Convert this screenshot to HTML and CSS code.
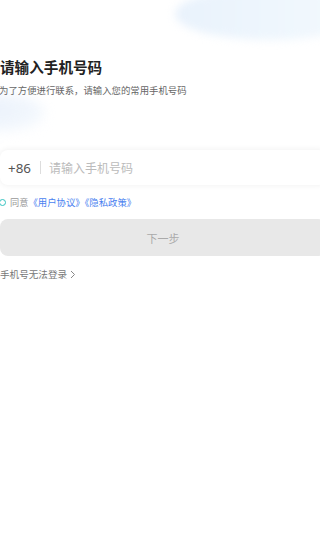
FILE: index.html
```html
<!DOCTYPE html>
<html lang="zh-CN">
<head>
<meta charset="utf-8">
<link rel="stylesheet" href="styles.css">
</head>
<body>
<div class="page">
  <div class="blob blob-top"></div>
  <div class="blob blob-left"></div>
  <div class="content">
    <h1 class="title">请输入手机号码</h1>
    <p class="subtitle">为了方便进行联系，请输入您的常用手机号码</p>
    <div class="phone-box">
      <span class="code">+86</span>
      <span class="divider"></span>
      <span class="placeholder">请输入手机号码</span>
    </div>
    <div class="agree">
      <span class="radio"></span>
      <span class="agree-text">同意</span>
      <span class="link">《用户协议》《隐私政策》</span>
    </div>
    <div class="next-btn">下一步</div>
    <div class="alt">手机号无法登录<svg class="chev" width="6" height="9" viewBox="0 0 6 9"><path d="M1 1l3.5 3.5L1 8" fill="none" stroke="#888" stroke-width="1"/></svg></div>
  </div>
</div>
</body>
</html>
```
FILE: styles.css
```css
html, body {
  margin: 0;
  padding: 0;
  background: #fff;
  overflow: hidden;
  width: 320px;
  height: 559px;
}
.page {
  position: relative;
  width: 320px;
  height: 559px;
  overflow: hidden;
  font-family: "Noto Sans CJK SC", "Noto Sans", sans-serif;
}
.blob {
  position: absolute;
  border-radius: 50%;
  filter: blur(4px);
}
.blob-top {
  left: 175px;
  top: -12px;
  width: 190px;
  height: 52px;
  background: linear-gradient(90deg, #e9f2fc 0%, #eef6fd 50%, #f4f9fe 100%);
}
.blob-left {
  left: -40px;
  top: 94px;
  width: 85px;
  height: 38px;
  background: radial-gradient(ellipse at 30% 40%, #eaf1fb 0%, #f2f7fd 60%, rgba(255,255,255,0) 100%);
  filter: blur(6px);
}
.content {
  position: relative;
  width: 326px;
  display: flex;
  flex-direction: column;
  padding-top: 56px;
}
.title {
  margin: 0;
  font-size: 14.6px;
  font-weight: 700;
  line-height: 22px;
  color: #222;
}
.subtitle {
  margin: 5px 0 0 -1px;
  font-size: 9.4px;
  line-height: 14px;
  color: #666;
}
.phone-box {
  margin-top: 53px;
  height: 35px;
  background: #fff;
  border-radius: 8px;
  box-shadow: 0 0 6px rgba(0,0,0,0.07);
  display: flex;
  align-items: center;
  padding-left: 8px;
}
.code {
  font-size: 13.4px;
  color: #555;
  font-family: "Noto Sans", sans-serif;
}
.divider {
  width: 1px;
  height: 13px;
  background: #ddd;
  margin: 0 8px 0 9px;
}
.placeholder {
  font-size: 12px;
  color: #bbb;
}
.agree {
  margin-top: 10px;
  display: flex;
  align-items: center;
  height: 14px;
  font-size: 9.2px;
}
.radio {
  width: 5px;
  height: 5px;
  border: 1px solid #33c2c0;
  border-radius: 50%;
  margin: 0 4px 0 -1px;
}
.agree-text {
  color: #999;
}
.link {
  color: #4a7ff0;
  font-size: 9.4px;
}
.next-btn {
  margin-top: 10px;
  height: 37px;
  border-radius: 8px;
  background: #e8e8e8;
  color: #aaa;
  font-size: 11px;
  display: flex;
  align-items: center;
  justify-content: center;
}
.alt {
  margin-top: 11px;
  font-size: 9.6px;
  color: #777;
  display: flex;
  align-items: center;
  gap: 3px;
}
.chev {
  display: block;
}
```
